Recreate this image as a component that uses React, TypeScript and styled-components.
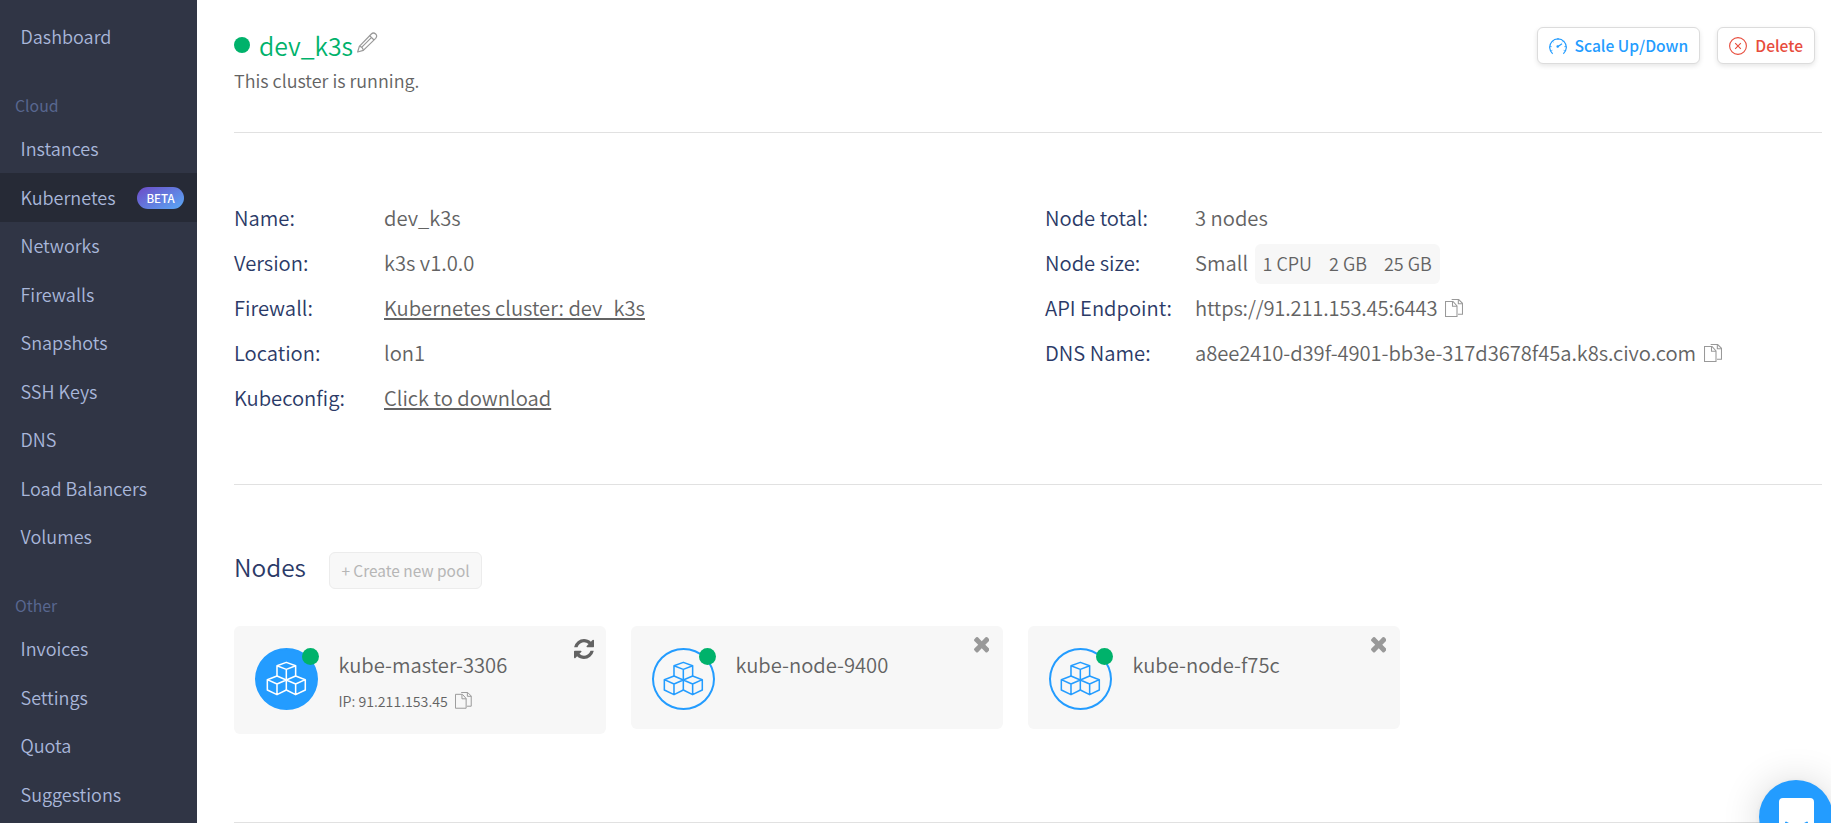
import React from "react";
import styled, { createGlobalStyle, css } from "styled-components";

const GlobalStyle = createGlobalStyle`
  *, *::before, *::after { box-sizing: border-box; }
  body {
    margin: 0;
    background: #fff;
    color: #636363;
    font-family: "Noto Sans CJK SC", "Noto Sans", sans-serif;
    font-weight: 350;
    font-size: 20.2px;
    overflow: hidden;
  }
`;

const Page = styled.div`
  display: flex;
  height: 823px;
  overflow: hidden;
`;

/* Sidebar */

const Sidebar = styled.nav`
  flex: 0 0 197px;
  padding-top: 12.5px;
  background: #303545;
`;

const NavItem = styled.a<{ $active?: boolean }>`
  display: flex;
  align-items: center;
  justify-content: space-between;
  height: 48.5px;
  padding: 0 13px 1px 20.5px;
  font-size: 18px;
  line-height: 26px;
  color: #a9b7da;
  white-space: nowrap;
  ${(p) => p.$active && css`background: #262a36;`}
`;

const NavHeading = styled.h6`
  margin: 0;
  height: 63.5px;
  padding: 32.5px 0 0 15px;
  font-size: 15.8px;
  font-weight: 400;
  line-height: 24px;
  color: #586790;
`;

const BetaBadge = styled.span`
  display: flex;
  align-items: center;
  justify-content: center;
  width: 47px;
  height: 22px;
  margin-top: 2px;
  border-radius: 11px;
  background: linear-gradient(150deg, #6c4fc9 5%, #5aa5f3 95%);
  color: #fff;
  font-size: 11.5px;
  font-weight: 500;
  line-height: 22px;
`;

/* Main area */

const Main = styled.main`
  flex: 1;
  padding: 0 9px 0 37px;
`;

const Header = styled.header`
  display: flex;
  justify-content: space-between;
  height: 133px;
  padding: 27px 7px 0 0;
  border-bottom: 1px solid #e1e1e1;
`;

const TitleRow = styled.div`
  display: flex;
  align-items: flex-start;
  height: 40px;
`;

const StatusDot = styled.span`
  width: 16px;
  height: 16px;
  margin: 10px 9px 0 0;
  border-radius: 50%;
  background: #00b26b;
`;

const Title = styled.h1`
  margin: 0 4px 0 0;
  font-size: 24.8px;
  font-weight: 350;
  line-height: 36px;
  color: #00b26b;
`;

const PencilSvg = styled.svg`
  width: 21px;
  height: 21px;
  margin-top: 5px;
`;

const Subtitle = styled.p`
  margin: 0;
  font-size: 17.95px;
  line-height: 26px;
`;

const Actions = styled.div`
  display: flex;
  gap: 17px;
`;

const ActionButton = styled.button<{ $color: string }>`
  display: flex;
  align-items: center;
  gap: 8px;
  height: 37px;
  padding: 0 11px;
  border: 1px solid #dcdcdc;
  border-radius: 6px;
  background: #fff;
  box-shadow: 0 2px 5px rgba(0, 0, 0, 0.1);
  color: ${(p) => p.$color};
  font: 500 15.6px/24px "Noto Sans CJK SC", "Noto Sans", sans-serif;

  svg {
    width: 18px;
    height: 18px;
  }

  span {
    margin-top: -1px;
  }
`;

const Details = styled.section`
  display: grid;
  grid-template-columns: 811px 1fr;
  height: 352px;
  padding-top: 61px;
  border-bottom: 1px solid #e1e1e1;
`;

const DetailRow = styled.div`
  display: flex;
  align-items: center;
  height: 45px;
  padding-top: 3px;
  line-height: 30px;
  white-space: nowrap;
`;

const Label = styled.span`
  width: 150px;
  color: #2b3a67;
`;

const Code = styled.span<{ $tracking: number }>`
  letter-spacing: ${(p) => p.$tracking}px;
`;

const TextLink = styled.a`
  color: #636363;
  text-decoration: underline;
  text-decoration-thickness: 2px;
  text-underline-offset: 2px;
  text-decoration-skip-ink: none;
`;

const Specs = styled.span`
  display: flex;
  gap: 17px;
  align-items: center;
  height: 40px;
  margin: 1px 0 0 7px;
  padding: 0 8px 2px 7.5px;
  border-radius: 6px;
  background: #f7f7f7;
  font-size: 18px;
`;

const CopySvg = styled.svg<{ $size: number }>`
  flex: none;
  width: ${(p) => p.$size}px;
  height: ${(p) => p.$size}px;
  margin: -1px 0 0 7.5px;
`;

/* Nodes */

const Nodes = styled.section`
  height: 338px;
  padding-top: 67px;
  border-bottom: 1px solid #e1e1e1;
`;

const NodesHeader = styled.div`
  display: flex;
  align-items: flex-start;
  height: 74px;
`;

const SectionTitle = styled.h2`
  width: 95px;
  margin: 0;
  font-size: 24.4px;
  font-weight: 350;
  line-height: 30px;
  color: #2b3a67;
`;

const PoolButton = styled.button`
  height: 37px;
  width: 153px;
  padding: 0 0 2px;
  border: 1px solid #ececec;
  border-radius: 6px;
  background: #f8f8f8;
  color: #b6b6b6;
  font: 400 15.4px/24px "Noto Sans CJK SC", "Noto Sans", sans-serif;
`;

const CardList = styled.div`
  display: flex;
  align-items: flex-start;
  gap: 25px;
`;

const Card = styled.article<{ $tall?: boolean }>`
  display: flex;
  align-items: flex-start;
  width: 372px;
  height: ${(p) => (p.$tall ? 108 : 103)}px;
  padding: 22px 12px 0 21px;
  border-radius: 6px;
  background: #f7f7f7;
`;

const Avatar = styled.div<{ $filled?: boolean }>`
  position: relative;
  display: flex;
  align-items: center;
  justify-content: center;
  width: 63px;
  height: 62px;
  margin-right: 20.5px;
  border: 2px solid #239cff;
  border-radius: 50%;
  background: ${(p) => (p.$filled ? "#239cff" : "transparent")};
  color: ${(p) => (p.$filled ? "#fff" : "#239cff")};

  svg {
    width: 41.3px;
    height: 35px;
    margin: 0 0 1px 1px;
  }
`;

const AvatarStatus = styled.span`
  position: absolute;
  top: -2px;
  right: -3px;
  width: 17px;
  height: 17px;
  border-radius: 50%;
  background: #00b26b;
`;

const CardText = styled.div`
  flex: 1;
  padding-top: 2px;
`;

const NodeName = styled.h3`
  margin: 0;
  font-size: 20.2px;
  font-weight: 350;
  line-height: 30px;
`;

const NodeIp = styled.div`
  display: flex;
  align-items: center;
  height: 24px;
  margin-top: 9px;
  font-size: 14.2px;
  line-height: 24px;
`;

const CardAction = styled.svg<{ $size: number; $top: number; $right?: number }>`
  width: ${(p) => p.$size}px;
  height: ${(p) => p.$size}px;
  margin-top: ${(p) => p.$top}px;
  margin-right: ${(p) => p.$right ?? 0}px;
`;

const ChatLauncher = styled.button`
  position: fixed;
  left: 1759px;
  top: 780px;
  width: 74px;
  height: 74px;
  padding: 0;
  border: 0;
  border-radius: 50%;
  background: #239cff;
  box-shadow: 0 1px 7px rgba(0, 0, 0, 0.06), 0 2px 39px rgba(0, 0, 0, 0.16);
`;

const ChatSvg = styled.svg`
  display: block;
  width: 74px;
  height: 74px;
`;

function PencilIcon() {
  return (
    <PencilSvg viewBox="0 0 63 63" fill="none" stroke="#999" strokeWidth="3.6" strokeLinejoin="round">
      <path d="M2 60 L7 43 L43 6 Q49 0 56 6 Q62 12 56 19 L19 55 Z" />
      <path d="M7 43 Q17 44 19 55 M38 11 L51 24 M43 17 L13 47" />
    </PencilSvg>
  );
}

function CopyIcon({ size = 18 }: { size?: number }) {
  return (
    <CopySvg $size={size} viewBox="0 0 54 54" fill="none" stroke="#999" strokeWidth="3.2">
      <path d="M1.5 7.5 H24 L36 21 V52.5 H1.5 Z" />
      <path d="M22.5 8 V22 H36" />
      <path d="M20 1.5 H41 L52.5 13 V46 H39" />
      <path d="M40 2 V14 H52" />
    </CopySvg>
  );
}

function GaugeIcon() {
  return (
    <svg viewBox="0 0 54 54" fill="none" stroke="currentColor" strokeWidth="3.6">
      <path d="M11 50 A25 25 0 1 1 43 50" />
      <path d="M27 3 V9 M2 29 H8 M46 29 H52 M9.500 11.500 L13.500 15.500 M44.500 11.500 L40.500 15.500 M6 42 L10 40 M48 42 L44 40" strokeWidth="2.500" />
      <path d="M26 29 L39 20.500" />
      <circle cx="26" cy="28.500" r="2" fill="currentColor" />
    </svg>
  );
}

function DeleteIcon() {
  return (
    <svg viewBox="0 0 54 54" fill="none" stroke="currentColor" strokeWidth="3.3">
      <circle cx="27" cy="27" r="25.200" />
      <path d="M18.500 18.500 L35.500 35.500 M35.500 18.500 L18.500 35.500" />
    </svg>
  );
}

function CubesIcon() {
  return (
    <svg viewBox="140 153 124 105" fill="none" stroke="currentColor" strokeWidth="4.6" strokeLinejoin="round">
      <path d="M173 167 L201 157 L229 167 L201 178 Z M173 167 V198 M229 167 V198 M201 178 V240" />
      <path d="M144 209 L173 198 L201 210 L173 222 Z M144 209 V240 L173 254 L201 240 M173 222 V254" />
      <path d="M201 210 L229 198 L258 209 L229 222 Z M258 209 V240 L229 254 L201 240 M229 222 V254" />
    </svg>
  );
}

function RefreshIcon() {
  return (
    <CardAction $size={20} $top={-9} viewBox="128 128 1536 1536" fill="#636363">
      <path d="M1639 1056q0 5-1 7-64 268-268 434.500t-478 166.500q-146 0-282.500-55t-243.500-157l-129 129q-19 19-45 19t-45-19-19-45v-448q0-26 19-45t45-19h448q26 0 45 19t19 45-19 45l-137 137q71 66 161 102t187 36q134 0 250-65t186-179q11-17 53-117 8-23 30-23h192q13 0 22.500 9.500t9.500 22.500zm25-800v448q0 26-19 45t-45 19h-448q-26 0-45-19t-19-45 19-45l138-138q-148-137-349-137-134 0-250 65t-186 179q-11 17-53 117-8 23-30 23h-199q-13 0-22.500-9.500t-9.500-22.500v-7q65-268 270-434.500t480-166.500q146 0 284 55.500t245 156.500l130-129q19-19 45-19t45 19 19 45z" />
    </CardAction>
  );
}

function CloseIcon() {
  return (
    <CardAction $size={15.5} $top={-11} $right={2} viewBox="302 366 1188 1188" fill="#999">
      <path d="M1490 1322q0 40-28 68l-136 136q-28 28-68 28t-68-28l-294-294-294 294q-28 28-68 28t-68-28l-136-136q-28-28-28-68t28-68l294-294-294-294q-28-28-28-68t28-68l136-136q28-28 68-28t68 28l294 294 294-294q28-28 68-28t68 28l136 136q28 28 28 68t-28 68l-294 294 294 294q28 28 28 68z" />
    </CardAction>
  );
}

const cloudItems = ["Instances", "Kubernetes", "Networks", "Firewalls", "Snapshots", "SSH Keys", "DNS", "Load Balancers", "Volumes"];
const otherItems = ["Invoices", "Settings", "Quota", "Suggestions"];
const nodes = [
  { name: "kube-master-3306", ip: "91.211.153.45" },
  { name: "kube-node-9400" },
  { name: "kube-node-f75c" },
];

function Detail({ label, children }: { label: string; children: React.ReactNode }) {
  return (
    <DetailRow>
      <Label>{label}</Label>
      {children}
    </DetailRow>
  );
}

export default function App() {
  return (
    <>
      <GlobalStyle />
      <Page>
        <Sidebar>
          <NavItem>Dashboard</NavItem>
          <NavHeading>Cloud</NavHeading>
          {cloudItems.map((item) => (
            <NavItem key={item} $active={item === "Kubernetes"}>
              {item}
              {item === "Kubernetes" && <BetaBadge>BETA</BetaBadge>}
            </NavItem>
          ))}
          <NavHeading>Other</NavHeading>
          {otherItems.map((item) => (
            <NavItem key={item}>{item}</NavItem>
          ))}
        </Sidebar>
        <Main>
          <Header>
            <div>
              <TitleRow>
                <StatusDot />
                <Title>dev_k3s</Title>
                <PencilIcon />
              </TitleRow>
              <Subtitle>This cluster is running.</Subtitle>
            </div>
            <Actions>
              <ActionButton $color="#239cff">
                <GaugeIcon />
                <span>Scale Up/Down</span>
              </ActionButton>
              <ActionButton $color="#e74c3c">
                <DeleteIcon />
                <span>Delete</span>
              </ActionButton>
            </Actions>
          </Header>
          <Details>
            <div>
              <Detail label="Name:">dev_k3s</Detail>
              <Detail label="Version:">k3s v1.0.0</Detail>
              <Detail label="Firewall:">
                <TextLink>Kubernetes cluster: dev_k3s</TextLink>
              </Detail>
              <Detail label="Location:">lon1</Detail>
              <Detail label="Kubeconfig:">
                <TextLink>Click to download</TextLink>
              </Detail>
            </div>
            <div>
              <Detail label="Node total:">3 nodes</Detail>
              <Detail label="Node size:">
                Small
                <Specs>
                  <span>1 CPU</span>
                  <span>2 GB</span>
                  <span>25 GB</span>
                </Specs>
              </Detail>
              <Detail label="API Endpoint:">
                <Code $tracking={-0.16}>https://91.211.153.45:6443</Code>
                <CopyIcon />
              </Detail>
              <Detail label="DNS Name:">
                <Code $tracking={-0.06}>a8ee2410-d39f-4901-bb3e-317d3678f45a.k8s.civo.com</Code>
                <CopyIcon />
              </Detail>
            </div>
          </Details>
          <Nodes>
            <NodesHeader>
              <SectionTitle>Nodes</SectionTitle>
              <PoolButton>+ Create new pool</PoolButton>
            </NodesHeader>
            <CardList>
              {nodes.map((node) => (
                <Card key={node.name} $tall={!!node.ip}>
                  <Avatar $filled={!!node.ip}>
                    <CubesIcon />
                    <AvatarStatus />
                  </Avatar>
                  <CardText>
                    <NodeName>{node.name}</NodeName>
                    {node.ip && (
                      <NodeIp>
                        IP: {node.ip}
                        <CopyIcon size={16.7} />
                      </NodeIp>
                    )}
                  </CardText>
                  {node.ip ? <RefreshIcon /> : <CloseIcon />}
                </Card>
              ))}
            </CardList>
          </Nodes>
        </Main>
      </Page>
      <ChatLauncher aria-label="Chat">
        <ChatSvg viewBox="0 0 74 74">
          <path d="M24 18 H51 Q55 18 55 22 V56 Q50 52 44 52 H24 Q20 52 20 48 V22 Q20 18 24 18 Z" fill="#fff" />
          <path d="M27 42.500 Q37.500 50 48 42.500" fill="none" stroke="#239cff" strokeWidth="2" strokeLinecap="round" />
        </ChatSvg>
      </ChatLauncher>
    </>
  );
}
